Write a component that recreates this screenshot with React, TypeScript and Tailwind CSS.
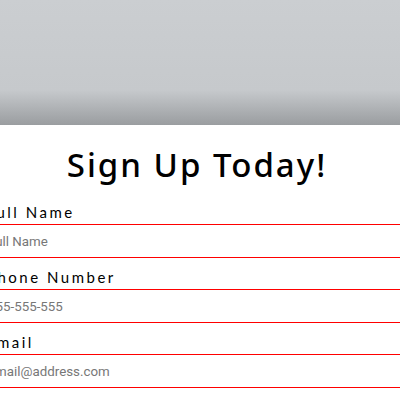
import React from "react";

function Field({ label, placeholder }: { label: string; placeholder: string }) {
  return (
    <div className="flex flex-col">
      <div className="h-[32px] flex items-center border-b border-[#ff0000] pt-[7px]">
        <span className="text-[15px] tracking-[2.5px] text-black" style={{ fontFamily: '"Lato", "Noto Sans", sans-serif' }}>
          {label}
        </span>
      </div>
      <div className="h-[33px] flex items-center border-b border-[#ff0000] pt-[1px] pl-[2px]">
        <span className="text-[13.333px] text-[#777]" style={{ fontFamily: 'Roboto, "Liberation Sans", sans-serif' }}>
          {placeholder}
        </span>
      </div>
    </div>
  );
}

export default function App() {
  return (
    <div className="w-[400px] h-[400px] overflow-hidden bg-white">
      <div className="h-[125px] bg-[linear-gradient(to_bottom,#cbced1_0%,#c6c9cc_72%,#9a9da0_100%)]" />
      <div className="h-[68px] flex items-center justify-center pt-[10px] pr-[6px]">
        <h1
          className="text-[33px] font-medium tracking-[2px] text-black leading-none"
          style={{ fontFamily: '"Noto Sans", "DejaVu Sans", sans-serif' }}
        >
          Sign Up Today!
        </h1>
      </div>
      <div className="ml-[-14px] flex flex-col">
        <Field label="Full Name" placeholder="Full Name" />
        <Field label="Phone Number" placeholder="555-555-555" />
        <Field label="Email" placeholder="email@address.com" />
      </div>
    </div>
  );
}
